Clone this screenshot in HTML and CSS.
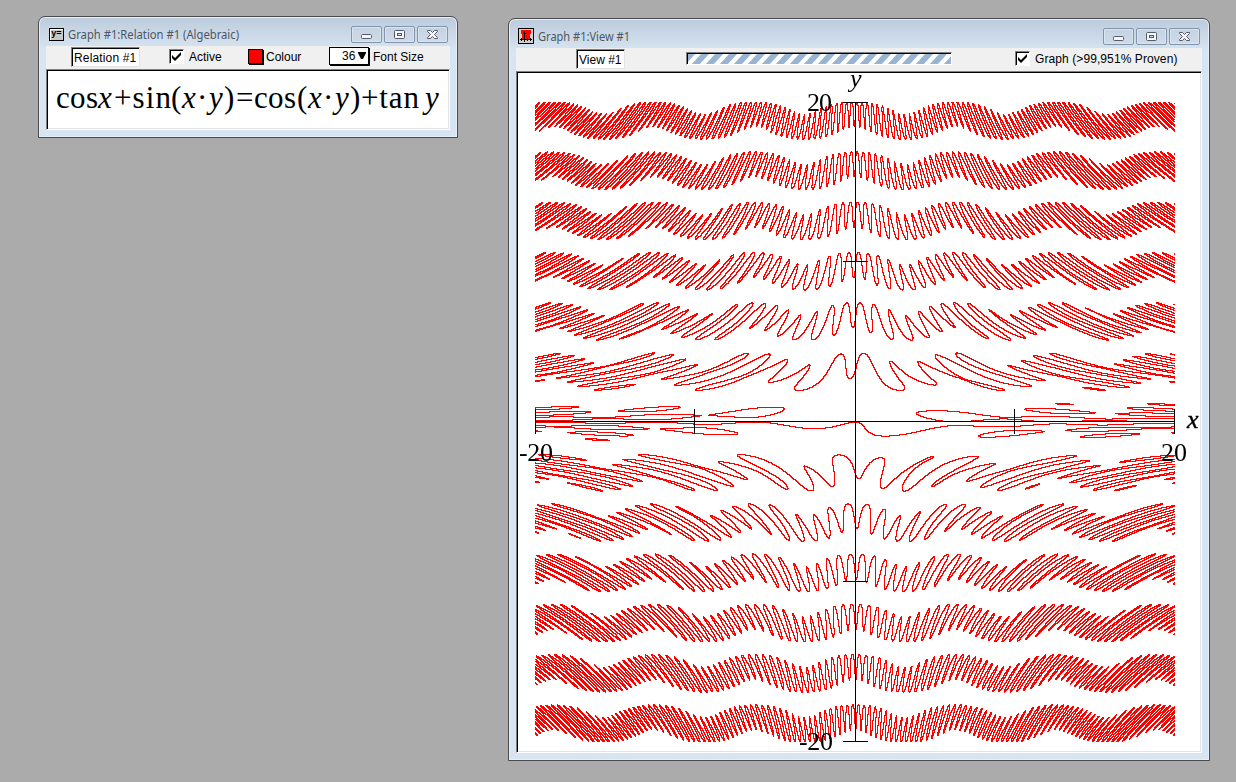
FILE: index.html
```html
<!DOCTYPE html>
<html lang="en">
<head>
<meta charset="utf-8">
<title>Graph #1</title>
<link rel="stylesheet" href="styles.css">
</head>
<body>
<svg class="defs" width="0" height="0">
  <defs>
    <symbol id="ic-min" viewBox="0 0 31 17"><rect x="10.500" y="8.500" width="10" height="4" rx="1" fill="#f6f6f6" stroke="#545a6b"/></symbol>
    <symbol id="ic-max" viewBox="0 0 31 17"><rect x="10.500" y="4.500" width="10" height="8" rx="1" fill="#f6f6f6" stroke="#545a6b"/><rect x="13.500" y="7.500" width="4" height="2" fill="#cfd9e6" stroke="#545a6b"/></symbol>
    <symbol id="ic-close" viewBox="0 0 31 17"><path d="M10.500 4.500h3l2 2 2-2h3v1l-3 3 3 3v1h-3l-2-2-2 2h-3v-1l3-3-3-3z" fill="#f6f6f6" stroke="#545a6b"/></symbol>
    <symbol id="ic-check" viewBox="0 0 15 15"><path d="M3 6v3l3 3 6-6V3L6 9z" fill="#000"/></symbol>
  </defs>
</svg>

<section class="window relation">
  <header class="titlebar">
    <span class="app-icon relation-icon">y=</span>
    <h1 class="title"><svg width="172" height="18"><text x="0" y="13" textLength="171" lengthAdjust="spacingAndGlyphs">Graph #1:Relation #1 (Algebraic)</text></svg></h1>
    <div class="controls">
      <button><svg><use href="#ic-min"/></svg></button>
      <button><svg><use href="#ic-max"/></svg></button>
      <button><svg><use href="#ic-close"/></svg></button>
    </div>
  </header>
  <div class="toolbar">
    <span class="field name-relation">Relation #1</span>
    <span class="checkbox"><svg><use href="#ic-check"/></svg></span>
    <span class="label label-active">Active</span>
    <span class="swatch"></span>
    <span class="label label-colour">Colour</span>
    <span class="select">36<svg width="8" height="8"><path d="M0 0h8v1L5 7H3L0 1z"/></svg></span>
    <span class="label">Font Size</span>
  </div>
  <div class="pane formula">
    <svg width="400" height="57">
      <text x="8" y="37" textLength="42">cos</text><text class="it" x="50" y="37" textLength="15">x</text>
      <text x="66" y="37" textLength="57">+sin</text><text x="123" y="37">(</text><text class="it" x="134" y="37" textLength="15">x</text><text x="149" y="37">·</text><text class="it" x="161" y="37" textLength="14">y</text><text x="176" y="37">)</text>
      <text x="188" y="37" textLength="60">=cos</text><text x="249" y="37">(</text><text class="it" x="260" y="37" textLength="15">x</text><text x="275" y="37">·</text><text class="it" x="287" y="37" textLength="14">y</text><text x="302" y="37">)</text>
      <text x="313" y="37" textLength="58">+tan</text><text class="it" x="377" y="37" textLength="14">y</text>
    </svg>
  </div>
</section>

<section class="window view">
  <header class="titlebar">
    <svg class="graph-icon" width="16" height="16" shape-rendering="crispEdges"><rect width="16" height="16" fill="#000"/><rect x="1" y="1" width="14" height="14" fill="#d0d0d0"/><path d="M3 2h10v4h-1v6H4V6H3z" fill="#f00"/><path d="M6 3h1v11H6zM2 11h12v1H2zM3 10h1v3H3zM9 10h1v3H9zM12 10h1v3h-1zM5 5h3v1H5z"/></svg>
    <h1 class="title"><svg width="94" height="18"><text x="0" y="13" textLength="92" lengthAdjust="spacingAndGlyphs">Graph #1:View #1</text></svg></h1>
    <div class="controls">
      <button><svg><use href="#ic-min"/></svg></button>
      <button><svg><use href="#ic-max"/></svg></button>
      <button><svg><use href="#ic-close"/></svg></button>
    </div>
  </header>
  <div class="toolbar">
    <span class="field name-view">View #1</span>
    <span class="progress"><svg width="264" height="11"><defs><pattern id="stripes" width="14" height="11" patternUnits="userSpaceOnUse"><path d="M3 11L13 0h8L11 11zM-11 11L-1 0h8L-3 11z" fill="#99b4d1"/></pattern></defs><rect width="264" height="11" fill="url(#stripes)"/></svg></span>
    <span class="checkbox"><svg><use href="#ic-check"/></svg></span>
    <span class="label label-proven">Graph (&gt;99,951% Proven)</span>
  </div>
  <div class="pane plot">
    <canvas id="plot" width="640" height="640"></canvas>
    <svg class="axes" width="682" height="678" shape-rendering="crispEdges">
      <path d="M17 348h640v1H17zM337 29h1v640h-1zM17 336h1v25h-1zM176 336h1v25h-1zM496 336h1v25h-1zM656 336h1v25h-1zM325 29h25v1h-25zM325 188h25v1h-25zM325 508h25v1h-25zM325 668h25v1h-25z"/>
      <text class="it" x="332" y="14">y</text><text class="it axis-x" x="669" y="355" textLength="13">x</text>
      <text x="289" y="38" textLength="25">20</text><text x="281" y="677" textLength="34">-20</text>
      <text x="1" y="388" textLength="34">-20</text><text x="643" y="388" textLength="26">20</text>
    </svg>
  </div>
</section>
<script src="plot.js"></script>
</body>
</html>
```
FILE: styles.css
```css
* { box-sizing: border-box; }
body { margin: 0; width: 1236px; height: 782px; overflow: hidden; background: #ababab; font: 12px "Liberation Sans", Arial, sans-serif; color: #000; position: relative; }
.defs { position: absolute; }
.window { position: absolute; display: flex; flex-direction: column; border: 1px solid #4b4b4b; border-radius: 7px 7px 0 0; background: linear-gradient(#bccbdc 0, #d7e4f1 32px, #d7e4f1 100%); box-shadow: inset 0 0 0 1px #e6eef7; padding: 1px 7px 7px 7px; }
.relation { left: 38px; top: 16px; width: 420px; height: 122px; }
.view { left: 508px; top: 18px; width: 702px; height: 743px; }
.titlebar { height: 28px; flex: none; display: flex; align-items: flex-start; padding-left: 3px; }
.app-icon { width: 15px; height: 13px; margin-top: 10px; }
.relation-icon { border: 1px solid #000; background: #c8c8c8; box-shadow: inset 1px 1px #fff; font: bold 9px/9px "Liberation Sans", sans-serif; text-align: center; }
.graph-icon { margin: 8px 0 0 -1px; flex: none; }
.title { margin: 8px 0 0 4px; font: 12px "Noto Sans", "Open Sans", sans-serif; height: 18px; }
.title text { fill: #4d5763; }
.title svg { display: block; }
.controls { margin: 8px 2px 0 auto; display: flex; gap: 2px; }
.controls button { width: 31px; height: 17px; padding: 0; border: 1px solid #8394ae; border-radius: 2px; background: linear-gradient(#c5d2e1, #cfdbe9); box-shadow: inset 0 0 0 1px #d9e4f0; }
.controls svg { display: block; width: 31px; height: 17px; margin: -1px; }
.toolbar { height: 23px; flex: none; display: flex; align-items: flex-start; background: #f0f0f0; padding-top: 2px; }
.relation .toolbar { padding-left: 25px; }
.view .toolbar { padding-left: 60px; }
.field { height: 20px; margin-top: -1px; border: 1px solid #e3e3e3; border-top-color: #808080; border-left-color: #808080; box-shadow: inset 1px 1px #000; background: #fff; padding: 2px 0 0 2px; line-height: 16px; white-space: nowrap; }
.name-relation { width: 69px; margin-right: 29px; letter-spacing: .15px; }
.name-view { width: 49px; margin-right: 61px; }
.checkbox { width: 15px; height: 15px; margin-top: 1px; border: 1px solid #fff; border-top-color: #808080; border-left-color: #808080; box-shadow: inset 1px 1px #000; background: #fff; }
.checkbox svg { display: block; width: 15px; height: 15px; margin: -1px; }
.label { line-height: 18px; margin-left: 5px; white-space: nowrap; }
.label-active { width: 59px; }
.label-proven { letter-spacing: .09px; }
.swatch { width: 15px; height: 15px; margin-top: 1px; background: #f00; border: 1px solid #000; box-shadow: 1px 1px #000; }
.label-colour { margin-left: 3px; width: 63px; }
.select { width: 40px; height: 18px; margin-top: -1px; background: #fff; border: 1px solid #000; box-shadow: 1px 1px #000; padding-left: 12px; line-height: 18px; display: flex; align-items: center; gap: 3px; white-space: nowrap; }
.select + .label { margin-left: 4px; }
.progress { width: 266px; height: 13px; margin: 2px 63px 0 0; border: 1px solid #fff; border-top-color: #808080; border-left-color: #808080; box-shadow: inset 1px 1px #000; background: #fff; padding: 1px 0 0 1px; overflow: hidden; }
.progress svg { display: block; }
.pane { flex: 1; background: #fff; border: 1px solid #fff; border-top-color: #808080; border-left-color: #808080; box-shadow: inset 1px 1px #000, inset -1px -1px #e3e3e3; padding: 1px; position: relative; overflow: hidden; }
.formula svg { display: block; font: 31px "Liberation Serif", "Times New Roman", serif; }
.it { font-style: italic; }
.plot canvas { display: block; margin: 29px 0 0 17px; }
.axes { position: absolute; left: 1px; top: 1px; font: 26px "Liberation Serif", "Times New Roman", serif; }
.axis-x { stroke: #000; stroke-width: .4px; }
```
FILE: plot.js
```js
// Plots cos x + sin(xy) = cos(xy) + tan y on [-20, 20] x [-20, 20].
// Both sides are multiplied by cos y, which removes the poles of tan y.
const SIZE = 640, SUB = 4, RANGE = 20;
const N = SIZE * SUB + 1;
const ctx = document.getElementById('plot').getContext('2d');
const image = ctx.createImageData(SIZE, SIZE);
const step = 2 * RANGE / (N - 1);
const cosX = Array.from({ length: N }, (_, i) => Math.cos(-RANGE + i * step));
const above = new Uint8Array(SIZE), below = new Uint8Array(SIZE);

function sampleRow(j) {
  const y = RANGE - j * step, cy = Math.cos(y), sy = Math.sin(y);
  const row = new Uint8Array(N);
  for (let i = 0; i < N; i++) {
    const p = (-RANGE + i * step) * y;
    row[i] = (cosX[i] + Math.sin(p) - Math.cos(p)) * cy - sy > 0 ? 1 : 0;
  }
  return row;
}

let edge = sampleRow(0);
for (let r = 0; r < SIZE; r++) {
  const rows = [edge];
  for (let k = 1; k <= SUB; k++) rows.push(sampleRow(r * SUB + k));
  edge = rows[SUB];
  above.fill(0); below.fill(0);
  for (const row of rows)
    for (let c = 0; c < SIZE; c++)
      for (let k = 0; k <= SUB; k++) row[c * SUB + k] ? above[c] = 1 : below[c] = 1;
  for (let c = 0; c < SIZE; c++)
    if (above[c] && below[c]) {
      const o = (r * SIZE + c) * 4;
      image.data[o] = 255;
      image.data[o + 3] = 255;
    }
}
ctx.putImageData(image, 0, 0);
```
